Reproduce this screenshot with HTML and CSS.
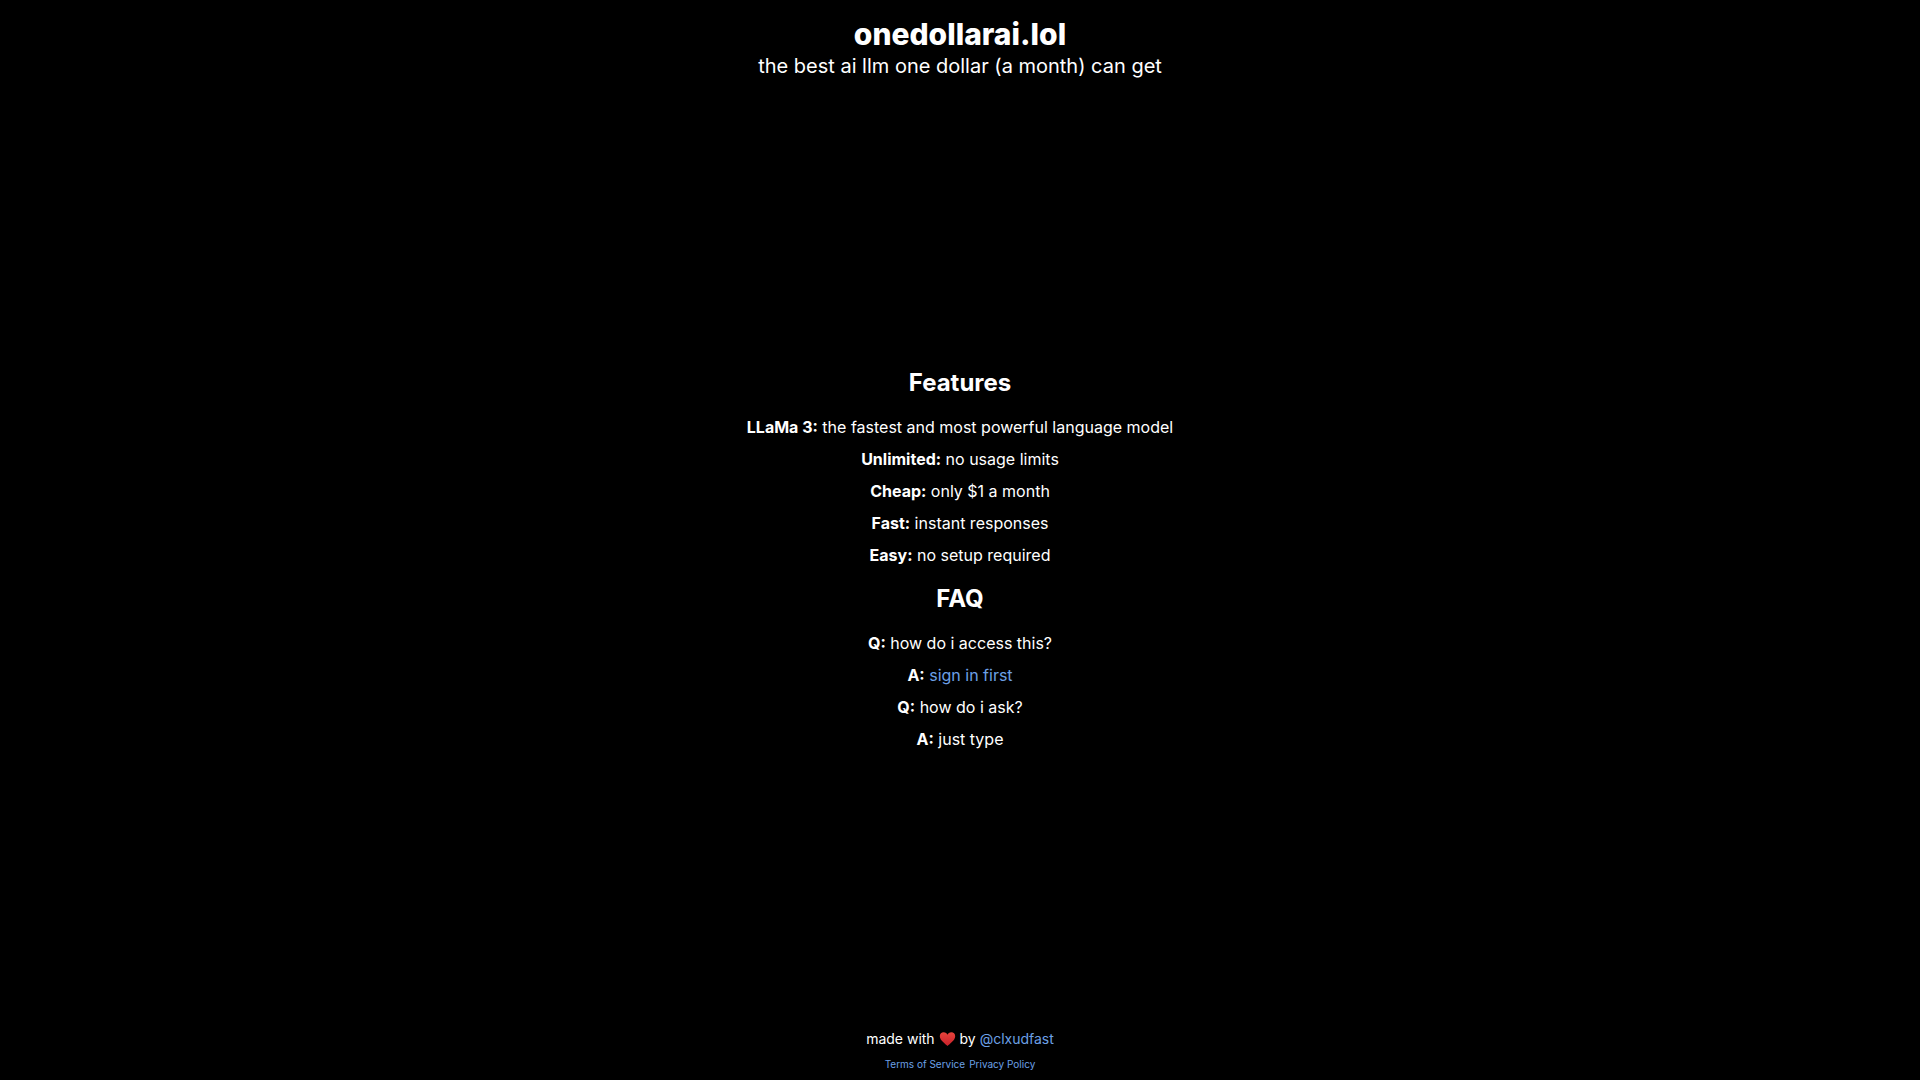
FILE: index.html
```html
<!DOCTYPE html>
<html lang="en">

<head>
    <meta charset="UTF-8">
    <meta name="viewport" content="width=device-width, initial-scale=1.0">
    <title>onedollarai.lol</title>
    <link rel="stylesheet" href="styles.css">
</head>

<body>
    <header>
        <h1>onedollarai.lol</h1>
        <p class="tagline">the best ai llm one dollar (a month) can get</p>
    </header>

    <main>
        <section>
            <h2>Features</h2>
            <ul>
                <li><b>LLaMa 3:</b> the fastest and most powerful language model</li>
                <li><b>Unlimited:</b> no usage limits</li>
                <li><b>Cheap:</b> only $1 a month</li>
                <li><b>Fast:</b> instant responses</li>
                <li><b>Easy:</b> no setup required</li>
            </ul>
        </section>

        <section>
            <h2>FAQ</h2>
            <ul>
                <li><b>Q:</b> how do i access this?</li>
                <li><b>A:</b> <a href="#">sign in first</a></li>
                <li><b>Q:</b> how do i ask?</li>
                <li><b>A:</b> just type</li>
            </ul>
        </section>
    </main>

    <footer>
        <p class="credit">made with
            <svg class="heart" viewBox="0 0 16 16" role="img" aria-label="love">
                <defs>
                    <linearGradient id="red" x1="0" y1="0" x2="0" y2="1">
                        <stop offset="0" stop-color="#e8443c" />
                        <stop offset="1" stop-color="#c8202a" />
                    </linearGradient>
                </defs>
                <path fill="url(#red)" d="M8 15C6.600 13.200 0.300 9.600 0.300 5.200C0.300 2.700 2 1.200 4.200 1.200C6 1.200 7.400 2.200 8 3.700C8.600 2.200 10 1.200 11.800 1.200C14 1.200 15.700 2.700 15.700 5.200C15.700 9.600 9.400 13.200 8 15Z" />
            </svg>
            by <a href="#">@clxudfast</a>
        </p>
        <nav class="legal">
            <a href="#">Terms of Service</a>
            <a href="#">Privacy Policy</a>
        </nav>
    </footer>
</body>

</html>
```

FILE: styles.css
```css
* {
    box-sizing: border-box;
    margin: 0;
    padding: 0;
}

body {
    display: flex;
    flex-direction: column;
    min-height: 100vh;
    padding: 16px 16px 8px;
    background-color: #000;
    color: #fff;
    font-family: Inter, sans-serif;
    font-size: 16px;
    font-weight: 400;
    line-height: 24px;
    text-align: center;
}

h1 {
    font-size: 30px;
    font-weight: 800;
    line-height: 36px;
}

.tagline {
    font-size: 20px;
    line-height: 28px;
}

main {
    flex: 1;
    display: flex;
    flex-direction: column;
    justify-content: center;
    gap: 16px;
    padding-top: 8px;
}

h2 {
    margin-bottom: 16px;
    font-size: 24px;
    font-weight: 700;
    line-height: 32px;
}

ul {
    display: flex;
    flex-direction: column;
    gap: 8px;
    list-style: none;
}

b {
    font-weight: 700;
}

a {
    color: #6ca0e6;
    text-decoration: none;
}

.credit {
    font-size: 14px;
    line-height: 20px;
}

.heart {
    width: 17px;
    height: 16px;
    vertical-align: -3px;
}

.legal {
    display: flex;
    justify-content: center;
    gap: 4px;
    margin-top: 7px;
    font-size: 10px;
    line-height: 16px;
}
```
